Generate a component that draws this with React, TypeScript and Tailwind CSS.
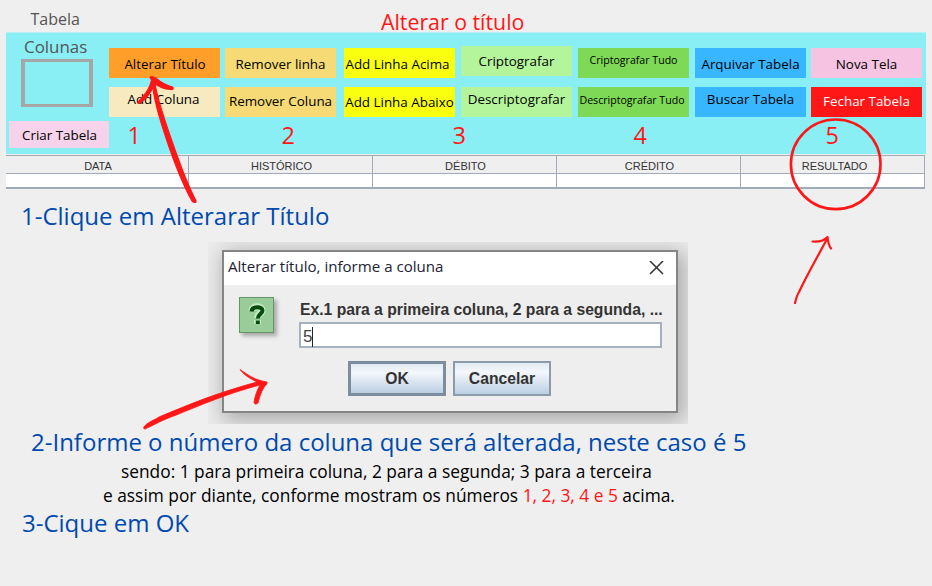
import React from "react";

type ButtonSpec = { label: string; look: string };

const columns: ButtonSpec[][] = [
  [
    { label: "Alterar Título", look: "bg-[#ff9f2a] text-[13.4px] pt-[3px] pl-px" },
    { label: "Add Coluna", look: "bg-[#f8eac0] text-[13.4px] pb-[4px] pr-[2px]" },
  ],
  [
    { label: "Remover linha", look: "bg-[#f5da75] text-[13.4px] pt-[3px]" },
    { label: "Remover Coluna", look: "bg-[#f5da75] text-[13.4px]" },
  ],
  [
    { label: "Add Linha Acima", look: "bg-[#faff0f] text-[13.4px] pt-[3px] pr-[4px]" },
    { label: "Add Linha Abaixo", look: "bg-[#faff0f] text-[13.4px] pt-[2px]" },
  ],
  [
    { label: "Criptografar", look: "bg-[#b4f49b] text-[13.4px] pt-[2px] relative -top-[2px]" },
    { label: "Descriptografar", look: "bg-[#b4f49b] text-[13.4px] pb-[4px]" },
  ],
  [
    { label: "Criptografar Tudo", look: "bg-[#7ed957] text-[10.6px] pb-[5px]" },
    { label: "Descriptografar Tudo", look: "bg-[#7ed957] text-[10.6px] pb-[3px] pr-[3px]" },
  ],
  [
    { label: "Arquivar Tabela", look: "bg-[#38b6ff] text-[13.4px] pt-[3px]" },
    { label: "Buscar Tabela", look: "bg-[#38b6ff] text-[13.4px] pb-[4px]" },
  ],
  [
    { label: "Nova Tela", look: "bg-[#f6c4e2] text-[13.4px] pt-[3px]" },
    { label: "Fechar Tabela", look: "bg-[#ff1616] text-white text-[13.4px]" },
  ],
];

const headers = ["DATA", "HISTÓRICO", "DÉBITO", "CRÉDITO", "RESULTADO"];

function ToolButton({ label, look }: ButtonSpec) {
  return (
    <button className={`flex h-[30px] w-[111px] items-center justify-center whitespace-nowrap leading-none ${look}`}>
      {label}
    </button>
  );
}

function Toolbar() {
  return (
    <section className="ml-[6px] flex h-[122px] w-[920px] border-t border-[#b5f1f4] bg-[#8aeff4]">
      <div className="flex w-[103px] shrink-0 flex-col pl-[3px]">
        <div className="h-[26px] pl-[15px] pt-[3px] text-[16.9px] leading-[22px] text-[#545454]">Colunas</div>
        <div className="ml-[12px] h-[48px] w-[72px] border-x-[4px] border-y-[3px] border-[#a6a6a6]" />
        <button className="mt-[14px] h-[27px] w-[100px] bg-[#f6d3ea] pl-px text-[13.4px] leading-[29px]">
          Criar Tabela
        </button>
      </div>
      <div className="flex flex-col">
        <div className="grid grid-cols-[116px_119px_117px_117px_117px_116px_111px] pt-[15px]">
          {columns.map((c) => (
            <div key={c[0].label} className="flex flex-col gap-[9px]">
              {c.map((b) => (
                <ToolButton key={b.label} {...b} />
              ))}
            </div>
          ))}
        </div>
        <div className="flex pl-[18.5px] pt-[3px] text-[23.5px] leading-[30px] text-[#ff1616]">
          <span className="w-[154px]">1</span>
          <span className="w-[171px]">2</span>
          <span className="w-[181px]">3</span>
          <span className="w-[192px]">4</span>
          <span>5</span>
        </div>
      </div>
    </section>
  );
}

function Table() {
  return (
    <section className="ml-[6px] mt-px w-[919px] border-b-2 border-r border-t border-[#a0abb7] font-['Liberation_Sans',Arial,sans-serif]">
      <div className="grid h-[18px] grid-cols-[183px_184px_184px_184px_183px] border-b border-[#a0abb7]">
        {headers.map((h) => (
          <div
            key={h}
            className="border-r border-[#a0abb7] pl-[2px] pt-px text-center text-[11px] leading-[18px] text-[#333] last:border-r-0 last:pl-[4px]"
          >
            {h}
          </div>
        ))}
      </div>
      <div className="grid h-[13px] grid-cols-[183px_184px_184px_184px_183px] bg-white">
        {headers.map((h) => (
          <div key={h} className="border-r border-[#a0abb7] last:border-r-0" />
        ))}
      </div>
    </section>
  );
}

function Dialog() {
  return (
    <div className="ml-[208px] h-[182px] w-[480px] overflow-hidden bg-[#ececec] pl-[14px] pt-[8px]">
      <div className="h-[163px] w-[456px] border-2 border-[#858585] bg-[#eeeeee] font-['Liberation_Sans',Arial,sans-serif] shadow-[4px_5px_20px_3px_rgba(0,0,0,0.28)]">
        <div className="flex h-[33px] items-center justify-between bg-white pl-[4px] pr-[12px]">
          <span className="pb-[4px] font-['Open_Sans',sans-serif] text-[15.1px] text-[#222233]">
            Alterar título, informe a coluna
          </span>
          <svg width="15" height="15" viewBox="0 0 15 15" stroke="#333" strokeWidth="1.5">
            <path d="M1 0L14 13M14 0L1 13" />
          </svg>
        </div>
        <div className="flex">
          <div className="ml-[15px] mt-[12px] flex h-[36px] w-[35px] items-center justify-center border border-[#65966a] bg-[#99cc99] shadow-[3px_3px_4px_rgba(0,0,0,0.3)]">
            <svg width="20" height="24" viewBox="0 0 20 24" fill="none">
              <g stroke="#c3eac3" strokeWidth="7">
                <path d="M5 8C5 2.5 15 2.5 15 7.5C15 11 10.5 10.5 10.5 15" />
                <path d="M10.5 17V21" />
              </g>
              <g stroke="#064b0b" strokeWidth="4">
                <path d="M4.5 8.5C5 3 15.500 3 15.500 7.500C15.500 11 10.800 11 10.800 15.500" />
                <path d="M10.800 17.500V21" />
              </g>
            </svg>
          </div>
          <div className="ml-[25px] mt-[14px] w-[365px]">
            <div className="h-[23px] whitespace-nowrap pl-px pt-px text-[15.7px] font-bold leading-[20px] text-[#333]">
              Ex.1 para a primeira coluna, 2 para a segunda, ...
            </div>
            <div className="flex h-[26px] w-[363px] items-center border-2 border-[#a5b1bf] bg-white pl-[2px] pt-[3px] text-[17px] text-[#444]">
              5<span className="h-[20px] w-px bg-[#222]" />
            </div>
          </div>
        </div>
        <div className="ml-[124px] mt-[13px] flex gap-[7px] text-[15.7px] font-bold text-[#333]">
          <button className="h-[35px] w-[98px] border-[3px] border-[#7c8d9d] bg-linear-to-b from-[#e1eaf2] via-[#f4f7fb] via-30% to-[#bbcfe3] pt-px">
            OK
          </button>
          <button className="h-[35px] w-[98px] border-2 border-[#8b9baa] bg-linear-to-b from-[#e1eaf2] via-[#f4f7fb] via-30% to-[#bbcfe3] pt-px">
            Cancelar
          </button>
        </div>
      </div>
    </div>
  );
}

function Annotations() {
  return (
    <svg
      className="pointer-events-none absolute inset-0"
      width="932"
      height="586"
      viewBox="0 0 932 586"
      fill="none"
      stroke="#ff1616"
      strokeLinecap="round"
      strokeLinejoin="round"
    >
      <circle cx="835.7" cy="164.3" r="44.8" strokeWidth="2.6" />
      <path
        fill="#ff1616"
        strokeWidth="1.2"
        d="M150 77.500C151 76 154 76.500 157 79C161 82.500 167 85.500 172.500 87C174 88 173 90 170.500 89.500C164 89 159 87 155 83.500C158 103 168 130 178 158C184 175 190 189 196 201C196.500 203 194 203 192 201C183 185 174 162 166 138C159 117 154 100 153 87C151 92 146 99 140 103C138 104.500 137 102 139 101C145 95 150 88 151.500 80Z"
      />
      <path
        fill="#ff1616"
        strokeWidth="0.8"
        d="M144 427C147 422 153 421 159 417C183 407 213 394 257 382C251 379 245 376 240 369.500C246 373.500 253 379 262 381L267 382L267 384C263 387 260 395 258 403C256 405 254 404 254 402C255 396 257 390 260 385C229 393 201 405 175 415.500C162 420 154 425 147 428C145 430 143 429 144 427Z"
      />
      <path
        strokeWidth="2.2"
        d="M795 303C796 299 797 295 799 292C808 273 818 256 827.500 238M812.500 241.500C819 242 824 241 827.500 237C828 242 829 246 831 248.500"
      />
    </svg>
  );
}

export default function App() {
  return (
    <main className="relative h-[586px] w-[932px] overflow-hidden bg-[#efefef] font-['Open_Sans',sans-serif] text-black">
      <header className="flex h-[32px]">
        <div className="w-[350px] pl-[30.5px] pt-[8px] text-[16px] leading-[22px] text-[#545454]">Tabela</div>
        <h1 className="pl-[31px] pt-[7px] text-[21.3px] leading-[30px] text-[#ff1616]">Alterar o título</h1>
      </header>
      <Toolbar />
      <Table />
      <p className="h-[53px] pl-[21px] pt-[12px] text-[24px] leading-[30px] text-[#004aad]">1-Clique em Alterarar Título</p>
      <Dialog />
      <p className="h-[35px] whitespace-nowrap pl-[31px] pt-[3px] text-[24px] leading-[30px] text-[#004aad]">
        2-Informe o número da coluna que será alterada, neste caso é 5
      </p>
      <p className="h-[24px] whitespace-nowrap pl-[121px] text-[17.34px] leading-[25px]">
        sendo: 1 para primeira coluna, 2 para a segunda; 3 para a terceira
      </p>
      <p className="h-[24px] whitespace-nowrap pl-[103px] text-[17.34px] leading-[25px]">
        e assim por diante, conforme mostram os números <span className="text-[#ff1616]">1, 2, 3, 4 e 5</span> acima.
      </p>
      <p className="pl-[22px] pt-px text-[24px] leading-[30px] text-[#004aad]">3-Cique em OK</p>
      <Annotations />
    </main>
  );
}
